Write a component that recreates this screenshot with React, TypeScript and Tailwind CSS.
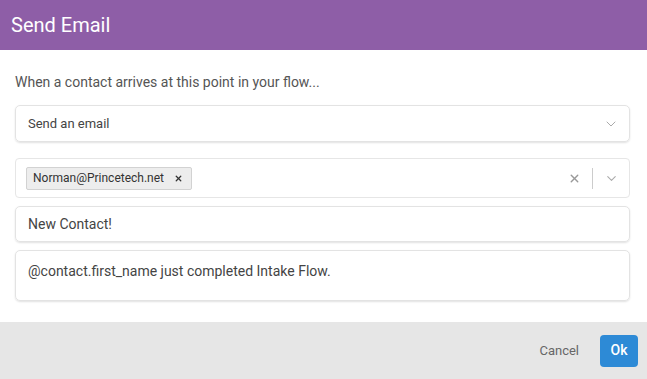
import { X, ChevronDown } from 'lucide-react'

export default function App() {
  return (
    <div className="w-[647px] h-[379px] flex flex-col bg-white font-['Roboto',sans-serif] overflow-hidden">
      {/* Header */}
      <div className="h-[50px] shrink-0 bg-[#8e5ea7] flex items-center px-[11px]">
        <h1 className="text-[20px] text-white leading-none">Send Email</h1>
      </div>

      {/* Body */}
      <div className="flex-1 flex flex-col px-[15px] pr-[17px] pt-[22px]">
        <p className="text-[14px] text-[#555] leading-[20px]">When a contact arrives at this point in your flow...</p>

        <div className="mt-[13px] h-[37px] flex items-center justify-between rounded-[5px] border border-[#e3e3e3] shadow-[0_1px_2px_rgba(0,0,0,0.12)] pl-[12px] pr-[10px]">
          <span className="text-[13px] text-[#444]">Send an email</span>
          <ChevronDown className="w-[16px] h-[16px] text-[#aaa]" strokeWidth={1.5} />
        </div>

        <div className="mt-[16px] h-[40px] flex items-center justify-between rounded-[4px] border border-[#e6e6e6] pl-[10px] pr-[10px]">
          <div className="h-[23px] flex items-center gap-[10px] bg-[#ededed] border border-[#d2d2d2] rounded-[2px] pl-[6px] pr-[8px]">
            <span className="text-[12px] text-[#333]">Norman@Princetech.net</span>
            <X className="w-[9px] h-[9px] text-[#333]" strokeWidth={3.5} />
          </div>
          <div className="flex items-center">
            <X className="w-[13px] h-[13px] text-[#999]" strokeWidth={2.5} />
            <div className="w-px h-[21px] bg-[#ccc] mx-[11px]" />
            <ChevronDown className="w-[15px] h-[15px] text-[#aaa]" strokeWidth={1.75} />
          </div>
        </div>

        <div className="mt-[8px] h-[36px] flex items-center rounded-[5px] border border-[#e3e3e3] shadow-[0_1px_2px_rgba(0,0,0,0.12)] px-[12px]">
          <span className="text-[14px] text-[#444]">New Contact!</span>
        </div>

        <div className="mt-[8px] h-[51px] rounded-[5px] border border-[#e3e3e3] shadow-[0_1px_2px_rgba(0,0,0,0.12)] px-[12px] pt-[8px]">
          <span className="text-[14px] text-[#444]">@contact.first_name just completed Intake Flow.</span>
        </div>
      </div>

      {/* Footer */}
      <div className="h-[57px] shrink-0 bg-[#e6e6e6] flex items-center justify-end gap-[21px] pr-[9px]">
        <span className="text-[13px] text-[#666]">Cancel</span>
        <button className="h-[32px] w-[38px] rounded-[4px] bg-[#2d8ad6] text-white text-[14px] font-medium">Ok</button>
      </div>
    </div>
  )
}
